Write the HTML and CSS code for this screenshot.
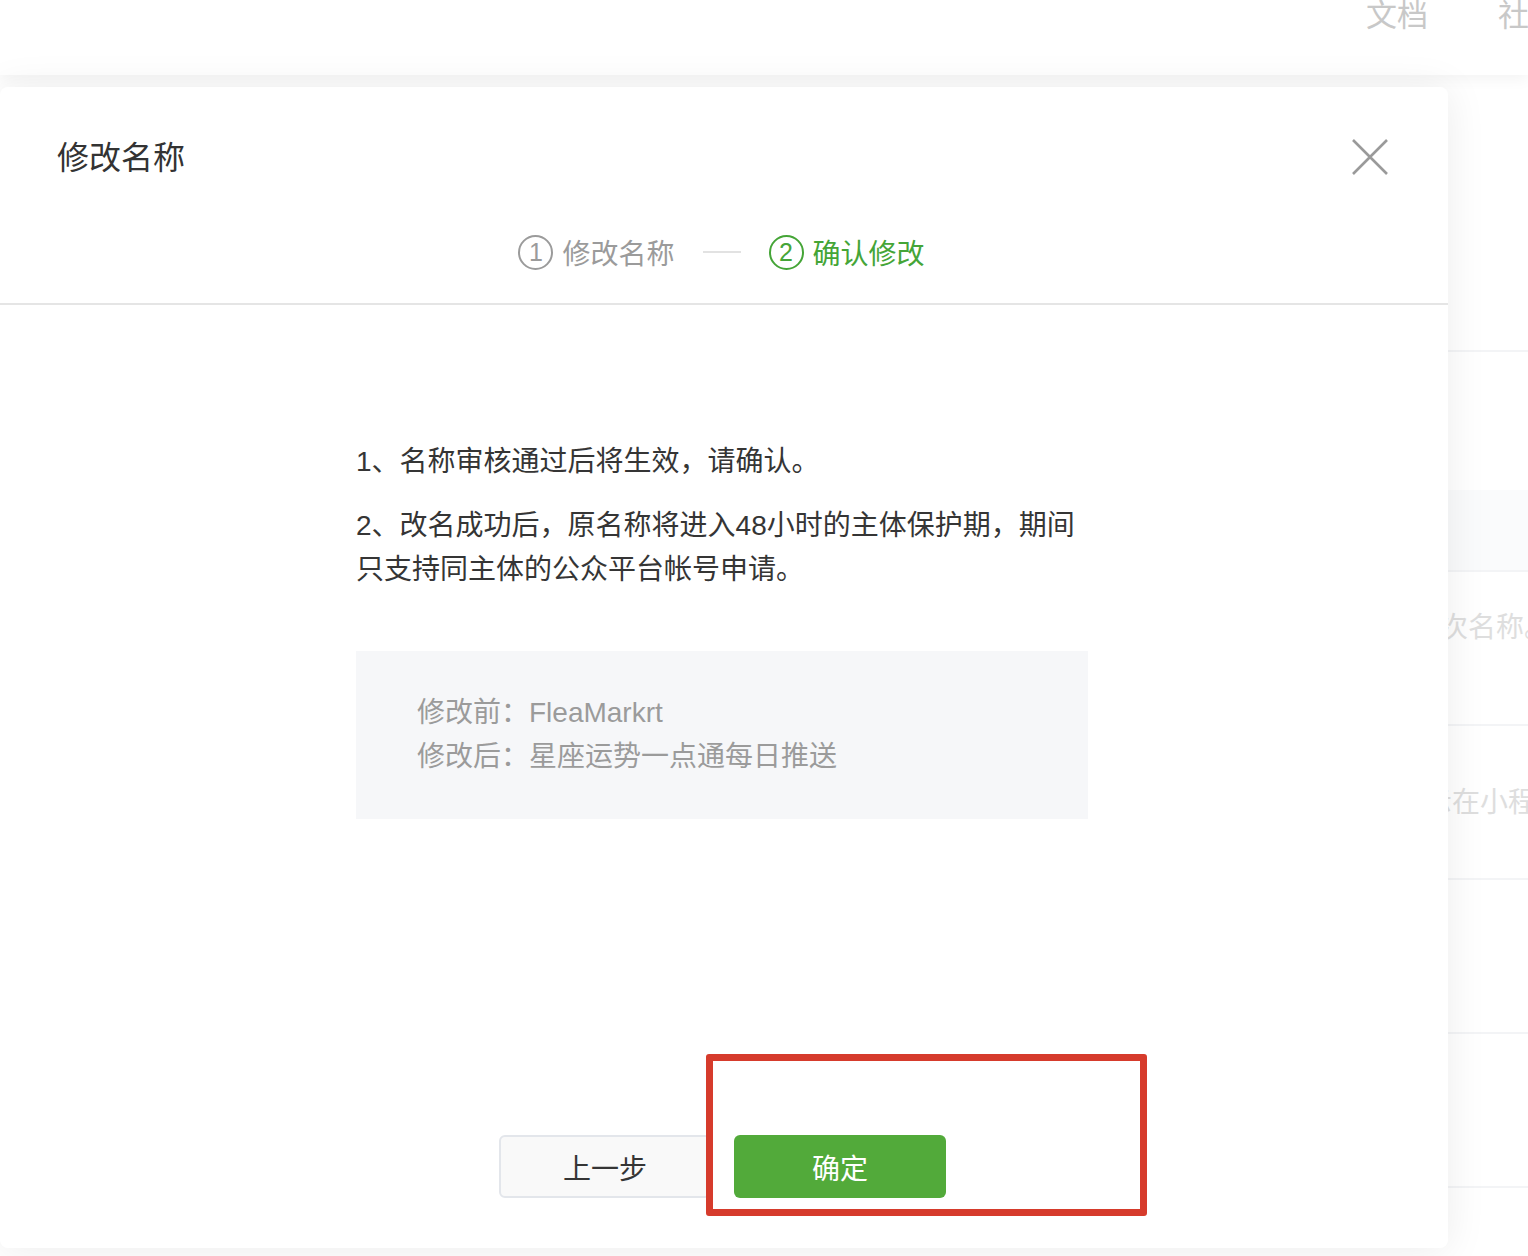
FILE: index.html
```html
<!DOCTYPE html>
<html lang="zh-CN">
  <head>
    <meta charset="UTF-8" />
    <meta name="viewport" content="width=device-width, initial-scale=1.0" />
    <title>修改名称</title>
    <link rel="stylesheet" href="styles.css">
  </head>
  <body>
    <header class="topbar">
      <nav class="topnav">
        <a href="#">文档</a>
        <a href="#">社区</a>
      </nav>
    </header>

    <main class="page">
      <div class="panel">
        <div class="panel-row panel-row--short"></div>
        <div class="panel-row panel-row--gap"></div>
        <div class="panel-row panel-row--band"></div>
        <div class="panel-row"><span>一年内可主动修改两次名称。</span></div>
        <div class="panel-row"><span class="shift">修改后的名称将展示在小程序资料页</span></div>
        <div class="panel-row"></div>
        <div class="panel-row"></div>
        <div class="panel-row"></div>
      </div>
    </main>

    <div class="modal">
      <div class="modal-hd">
        <h3 class="modal-title">修改名称</h3>
        <a class="modal-close" href="#">
          <svg width="36" height="36" viewBox="0 0 36 36">
            <path d="M1 1 L35 35 M35 1 L1 35" stroke="#9a9a9a" stroke-width="2.6" fill="none" />
          </svg>
        </a>
        <div class="steps">
          <div class="step">
            <span class="step-num">1</span>
            <span>修改名称</span>
          </div>
          <span class="step-line"></span>
          <div class="step step--active">
            <span class="step-num">2</span>
            <span>确认修改</span>
          </div>
        </div>
      </div>

      <div class="modal-bd">
        <div class="notice">
          <p>1、名称审核通过后将生效，请确认。</p>
          <p>2、改名成功后，原名称将进入48小时的主体保护期，期间只支持同主体的公众平台帐号申请。</p>
        </div>
        <div class="compare">
          <p>修改前：FleaMarkrt</p>
          <p>修改后：星座运势一点通每日推送</p>
        </div>
      </div>

      <div class="modal-ft">
        <button class="btn btn-default">上一步</button>
        <button class="btn btn-primary">确定</button>
      </div>

      <!-- annotation -->
      <div class="mark"></div>
    </div>
  </body>
</html>
```

FILE: styles.css
```css
* {
  box-sizing: border-box;
  margin: 0;
  padding: 0;
}

body {
  position: relative;
  width: 1528px;
  height: 1256px;
  overflow: hidden;
  background: #ffffff;
  color: #353535;
  font-family: "Liberation Sans", "Noto Sans CJK SC", sans-serif;
}

/* Top bar */
.topbar {
  position: relative;
  z-index: 1;
  display: flex;
  height: 75px;
  background: #ffffff;
  box-shadow: 0 4px 14px rgba(0, 0, 0, 0.05);
}

.topnav {
  display: flex;
  gap: 70px;
  height: 32px;
  margin-left: auto;
  margin-right: -32px;
}

.topnav a {
  font-size: 31px;
  line-height: 32px;
  color: #c8c8c8;
  text-decoration: none;
}

/* Page behind the dialog */
.panel {
  margin-top: 275px;
  margin-left: 1188px;
}

.panel-row {
  display: flex;
  align-items: center;
  height: 154px;
  border-top: 2px solid #f3f4f6;
  font-size: 28px;
  color: #dedede;
  white-space: nowrap;
}

.panel-row--short {
  height: 82px;
}

.panel-row--gap {
  height: 58px;
  border-top: none;
}

.panel-row--band {
  height: 80px;
  border-top: none;
  background: #fafbfc;
}

.panel-row span {
  margin-top: -46px;
}

.panel-row .shift {
  margin-top: -4px;
  padding-left: 12px;
}

/* Dialog */
.modal {
  position: absolute;
  top: 87px;
  left: 0;
  z-index: 2;
  display: flex;
  flex-direction: column;
  width: 1448px;
  height: 1161px;
  background: #ffffff;
  border-radius: 8px;
  box-shadow: 0 2px 40px rgba(0, 0, 0, 0.08);
}

.modal-hd {
  position: relative;
  padding: 49px 57px 29px;
  border-bottom: 2px solid #e5e5e5;
}

.modal-title {
  font-size: 32px;
  line-height: 44px;
  font-weight: normal;
  color: #333333;
}

.modal-close {
  position: absolute;
  top: 52px;
  right: 60px;
  width: 36px;
  height: 36px;
}

.modal-close svg {
  display: block;
}

.steps {
  display: flex;
  justify-content: center;
  align-items: center;
  height: 44px;
  margin-top: 50px;
  padding-right: 5px;
}

.step {
  display: flex;
  align-items: center;
  gap: 9px;
  font-size: 28px;
  color: #9b9b9b;
}

.step-num {
  display: flex;
  justify-content: center;
  align-items: center;
  width: 35px;
  height: 35px;
  border: 2px solid currentColor;
  border-radius: 50%;
  font-size: 25px;
  line-height: 1;
}

.step--active {
  color: #45a537;
}

.step-line {
  width: 38px;
  height: 2px;
  margin: 0 28px 0 28px;
  background: #e2e2e2;
}

.modal-bd {
  width: 732px;
  margin-left: 356px;
  padding-top: 135px;
  font-size: 28px;
  line-height: 44px;
}

.notice p + p {
  margin-top: 20px;
}

.compare {
  margin-top: 59px;
  padding: 40px 61px;
  background: #f6f7f9;
  color: #9b9b9b;
}

.modal-ft {
  display: flex;
  justify-content: center;
  gap: 23px;
  margin-top: 316px;
  padding-right: 3px;
}

.btn {
  width: 212px;
  height: 63px;
  border-radius: 6px;
  font-family: inherit;
  font-size: 28px;
  cursor: pointer;
}

.btn-default {
  background: #f9f9f9;
  border: 2px solid #e3e6eb;
  color: #353535;
}

.btn-primary {
  background: #52aa3a;
  border: none;
  color: #ffffff;
}

.mark {
  position: absolute;
  top: 967px;
  left: 706px;
  width: 441px;
  height: 162px;
  border: 7px solid #d63b2c;
  border-radius: 3px;
  pointer-events: none;
}
```
